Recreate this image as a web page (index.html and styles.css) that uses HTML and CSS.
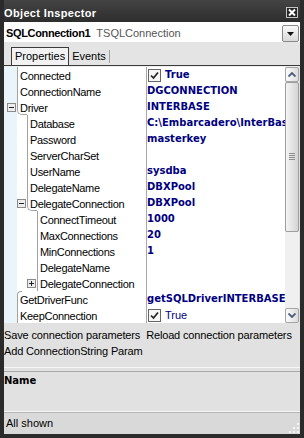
FILE: index.html
```html
<!DOCTYPE html>
<html lang="en">

<head>
    <meta charset="UTF-8">
    <title>Object Inspector</title>
    <link rel="stylesheet" href="styles.css">
</head>

<body>
    <div class="window">
        <div class="titlebar">
            <span class="title">Object Inspector</span>
            <svg class="close" width="12" height="11" viewBox="0 0 12 11">
                <rect x="0.5" y="0.5" width="11" height="10" fill="#262626" stroke="#c4c4c4"/>
                <path d="M3 2.5 L9 8.5 M9 2.5 L3 8.5" stroke="#fff" stroke-width="2"/>
            </svg>
        </div>

        <div class="combo">
            <span class="obj-name">SQLConnection1</span>
            <span class="obj-type">TSQLConnection</span>
            <span class="drop">
                <svg width="7" height="4" viewBox="0 0 7 4"><path d="M0 0 H7 L3.5 4 Z" fill="#111"/></svg>
            </span>
        </div>

        <div class="tabs">
            <span class="tab active">Properties</span>
            <span class="tab">Events</span>
        </div>

        <div class="grid">
            <div class="rows">
                <div class="row">
                    <div class="tree lv0"><span class="exp"></span><span class="label">Connected</span></div>
                    <div class="val"><svg class="check" width="13" height="13" viewBox="0 0 13 13"><rect x="0.5" y="0.5" width="12" height="12" fill="#f6f6f6" stroke="#666"/><path d="M3 6.5 L5.5 9 L10 3.5" fill="none" stroke="#222" stroke-width="1.7"/></svg>True</div>
                </div>
                <div class="row">
                    <div class="tree lv0"><span class="exp"></span><span class="label">ConnectionName</span></div>
                    <div class="val">DGCONNECTION</div>
                </div>
                <div class="row">
                    <div class="tree lv0"><span class="exp"><svg class="box" width="9" height="9" viewBox="0 0 9 9"><rect x="0.5" y="0.5" width="8" height="8" fill="#ececec" stroke="#8a8a8a"/><path d="M2 4.5 H7" stroke="#222"/></svg></span><span class="label open">Driver</span></div>
                    <div class="val">INTERBASE</div>
                </div>
                <div class="row">
                    <div class="tree lv1"><span class="exp"></span><span class="label">Database</span></div>
                    <div class="val">C:\Embarcadero\InterBase\examples\database\employee.gdb</div>
                </div>
                <div class="row">
                    <div class="tree lv1"><span class="exp"></span><span class="label">Password</span></div>
                    <div class="val">masterkey</div>
                </div>
                <div class="row">
                    <div class="tree lv1"><span class="exp"></span><span class="label">ServerCharSet</span></div>
                    <div class="val"></div>
                </div>
                <div class="row">
                    <div class="tree lv1"><span class="exp"></span><span class="label">UserName</span></div>
                    <div class="val">sysdba</div>
                </div>
                <div class="row">
                    <div class="tree lv1"><span class="exp"></span><span class="label">DelegateName</span></div>
                    <div class="val">DBXPool</div>
                </div>
                <div class="row">
                    <div class="tree lv1"><span class="exp"><svg class="box" width="9" height="9" viewBox="0 0 9 9"><rect x="0.5" y="0.5" width="8" height="8" fill="#ececec" stroke="#8a8a8a"/><path d="M2 4.5 H7" stroke="#222"/></svg></span><span class="label open">DelegateConnection</span></div>
                    <div class="val">DBXPool</div>
                </div>
                <div class="row">
                    <div class="tree lv2"><span class="exp"></span><span class="label">ConnectTimeout</span></div>
                    <div class="val">1000</div>
                </div>
                <div class="row">
                    <div class="tree lv2"><span class="exp"></span><span class="label">MaxConnections</span></div>
                    <div class="val">20</div>
                </div>
                <div class="row">
                    <div class="tree lv2"><span class="exp"></span><span class="label">MinConnections</span></div>
                    <div class="val">1</div>
                </div>
                <div class="row">
                    <div class="tree lv2"><span class="exp"></span><span class="label">DelegateName</span></div>
                    <div class="val"></div>
                </div>
                <div class="row">
                    <div class="tree lv2"><span class="exp"><svg class="box" width="9" height="9" viewBox="0 0 9 9"><rect x="0.5" y="0.5" width="8" height="8" fill="#ececec" stroke="#8a8a8a"/><path d="M2 4.5 H7 M4.5 2 V7" stroke="#222"/></svg></span><span class="label">DelegateConnection</span></div>
                    <div class="val"></div>
                </div>
                <div class="row">
                    <div class="tree lv0"><span class="exp"></span><span class="label ret">GetDriverFunc</span></div>
                    <div class="val">getSQLDriverINTERBASE</div>
                </div>
                <div class="row">
                    <div class="tree lv0"><span class="exp"></span><span class="label">KeepConnection</span></div>
                    <div class="val plain"><svg class="check" width="13" height="13" viewBox="0 0 13 13"><rect x="0.5" y="0.5" width="12" height="12" fill="#f6f6f6" stroke="#666"/><path d="M3 6.5 L5.5 9 L10 3.5" fill="none" stroke="#222" stroke-width="1.7"/></svg>True</div>
                </div>
            </div>

            <div class="vscroll">
                <div class="sbtn">
                    <svg width="8" height="5" viewBox="0 0 8 5"><path d="M0.5 4.5 L4 1 L7.5 4.5" fill="none" stroke="#4a5a78" stroke-width="1.8"/></svg>
                </div>
                <div class="thumb">
                    <svg width="6" height="8" viewBox="0 0 6 8"><path d="M0 0.5 H6 M0 2.5 H6 M0 4.5 H6 M0 6.5 H6" stroke="#8c8c8c"/></svg>
                </div>
                <div class="track"></div>
                <div class="sbtn">
                    <svg width="8" height="5" viewBox="0 0 8 5"><path d="M0.5 0.5 L4 4 L7.5 0.5" fill="none" stroke="#4a5a78" stroke-width="1.8"/></svg>
                </div>
            </div>
        </div>

        <div class="verbs">
            <span class="verb">Save connection parameters</span>
            <span class="verb">Reload connection parameters</span>
            <span class="verb">Add ConnectionString Param</span>
        </div>

        <div class="splitter"></div>

        <div class="help">
            <span class="help-title">Name</span>
        </div>

        <div class="splitter thin"></div>

        <div class="statusbar">
            <span>All shown</span>
            <svg class="grip" width="10" height="11" viewBox="0 0 10 11">
                <rect x="8" y="1" width="2" height="2" fill="#f4f4f4"/>
                <rect x="4" y="5" width="2" height="2" fill="#f4f4f4"/>
                <rect x="8" y="5" width="2" height="2" fill="#f4f4f4"/>
                <rect x="0" y="9" width="2" height="2" fill="#f4f4f4"/>
                <rect x="4" y="9" width="2" height="2" fill="#f4f4f4"/>
                <rect x="8" y="9" width="2" height="2" fill="#f4f4f4"/>
            </svg>
        </div>
    </div>
</body>

</html>
```

FILE: styles.css
```css
body {
    margin: 0;
    font-family: "Liberation Sans", Arial, sans-serif;
    font-size: 11px;
    color: #000;
}

.window {
    width: 304px;
    height: 438px;
    box-sizing: border-box;
    padding: 0 4px 4px 4px;
    background-color: #2b2b2b;
    display: flex;
    flex-direction: column;
}

.titlebar {
    height: 22px;
    box-sizing: border-box;
    padding-top: 5px;
    line-height: 17px;
    display: flex;
    justify-content: space-between;
    align-items: flex-start;
    background: linear-gradient(#444, #2d2d2d);
}

.title {
    color: #fff;
    font-weight: bold;
    letter-spacing: 0.35px;
}

.close {
    margin: 2px 2px 0 0;
}

.combo {
    height: 20px;
    box-sizing: border-box;
    padding: 3px 1px 0 2px;
    background-color: #fff;
    display: flex;
    line-height: 16px;
}

.obj-name {
    font-weight: bold;
    letter-spacing: -0.35px;
}

.obj-type {
    color: #555;
    margin-left: 6px;
    flex: 1;
}

.drop {
    width: 17px;
    height: 17px;
    box-sizing: border-box;
    border: 1px solid #8a8a8a;
    border-radius: 2px;
    background: linear-gradient(#fafafa, #d9d9d9);
    display: flex;
    align-items: center;
    justify-content: center;
}

.tabs {
    height: 24px;
    box-sizing: border-box;
    padding: 5px 0 0 7px;
    background-color: #e4e4e4;
    border-bottom: 1px solid #3a3a3a;
    display: flex;
    align-items: flex-start;
}

.tab {
    padding: 0 3px;
    line-height: 17px;
}

.tab.active {
    border: 1px solid #3a3a3a;
    border-bottom: none;
    background-color: #f2f2f2;
    height: 18px;
    box-sizing: border-box;
}

.tab:not(.active) {
    margin-top: 3px;
    line-height: 13px;
    border-right: 1px solid #a0a0a0;
}

.grid {
    height: 257px;
    box-sizing: border-box;
    border-top: 1px solid #eeeeee;
    background-color: #fff;
    display: flex;
}

.rows {
    width: 281px;
    display: flex;
    flex-direction: column;
}

.row {
    height: 16px;
    display: flex;
}

.tree {
    width: 142px;
    flex: none;
    display: flex;
    box-sizing: border-box;
    background: linear-gradient(to right, #e9f5fb 13px, #fff 13px);
}

.lv0 { padding-left: 2px; }
.lv1 { padding-left: 12px; }
.lv2 { padding-left: 22px; }

.exp {
    width: 11px;
    flex: none;
}

.box {
    display: block;
    margin: 4px 0 0 1px;
}

.label {
    flex: 1;
    position: relative;
    padding-left: 3px;
    line-height: 18px;
    letter-spacing: -0.3px;
    white-space: nowrap;
    overflow: hidden;
}

/* tree lines */
.label::before {
    content: "";
    position: absolute;
    left: 0;
    top: 0;
    bottom: 0;
    border-left: 1px solid #a2a2a2;
}

.label.open::before {
    bottom: 5px;
}

.label.open::after {
    content: "";
    position: absolute;
    left: 0;
    bottom: 0;
    width: 9px;
    height: 5px;
    border-left: 1px solid #a2a2a2;
    border-bottom: 1px solid #a2a2a2;
    border-bottom-left-radius: 5px;
}

.label.ret::before {
    width: 4px;
    border-top: 1px solid #a2a2a2;
    border-top-left-radius: 4px;
}

.val {
    flex: 1;
    min-width: 0;
    border-left: 1px solid #a8a8a8;
    display: flex;
    align-items: center;
    font-family: "DejaVu Sans", sans-serif;
    font-size: 10px;
    font-weight: bold;
    color: #000080;
    line-height: 18px;
    white-space: nowrap;
    overflow: hidden;
}

.val.plain {
    font-family: "Liberation Sans", Arial, sans-serif;
    font-size: 11px;
    font-weight: normal;
}

.check {
    flex: none;
    margin: 0 4px 0 1px;
}

.vscroll {
    width: 15px;
    box-sizing: border-box;
    padding-right: 1px;
    background-color: #e2e2e2;
    display: flex;
    flex-direction: column;
}

.sbtn {
    height: 15px;
    box-sizing: border-box;
    border: 1px solid #a5a5a5;
    border-radius: 2px;
    background: linear-gradient(to right, #fbfbfb, #dcdcdc);
    display: flex;
    align-items: center;
    justify-content: center;
}

.thumb {
    height: 150px;
    box-sizing: border-box;
    border: 1px solid #9e9e9e;
    border-radius: 2px;
    background: linear-gradient(to right, #f4f4f4, #d4d4d4);
    display: flex;
    align-items: center;
    justify-content: center;
}

.track {
    flex: 1;
    background-color: #f0f0f0;
}

.verbs {
    height: 44px;
    box-sizing: border-box;
    padding-top: 4px;
    background-color: #e1e1e1;
    display: flex;
    flex-wrap: wrap;
    align-content: flex-start;
    column-gap: 6px;
    line-height: 16px;
    letter-spacing: -0.15px;
}

.splitter {
    height: 5px;
    box-sizing: border-box;
    background-color: #e1e1e1;
    border-top: 1px solid #f6f6f6;
    border-bottom: 1px solid #a9a9a9;
}

.splitter.thin {
    height: 2px;
    border-bottom-color: #b4b4b4;
}

.help {
    height: 39px;
    background-color: #e1e1e1;
    line-height: 16px;
}

.help-title {
    font-family: "DejaVu Sans", sans-serif;
    font-size: 10px;
    font-weight: bold;
}

.statusbar {
    height: 21px;
    box-sizing: border-box;
    padding: 0 1px 1px 2px;
    background-color: #d9d9d9;
    line-height: 21px;
    display: flex;
    justify-content: space-between;
    align-items: flex-end;
}

.statusbar span {
    align-self: center;
}
```
